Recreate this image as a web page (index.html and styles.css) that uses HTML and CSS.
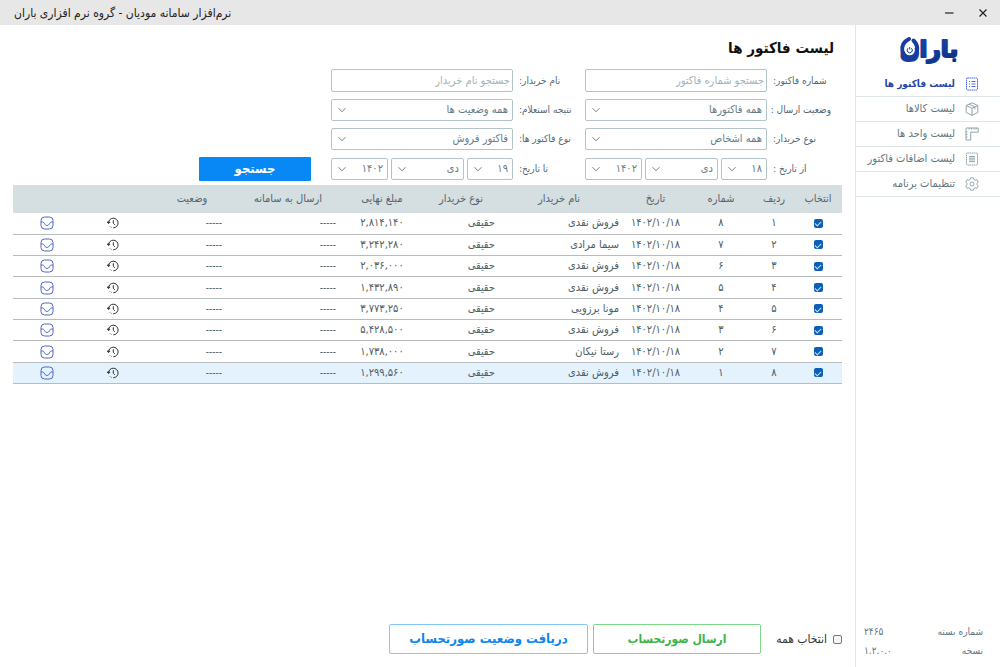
FILE: index.html
```html
<!DOCTYPE html>
<html lang="fa" dir="rtl">
<head>
<meta charset="utf-8">
<meta name="viewport" content="width=device-width, initial-scale=1">
<title>نرم‌افزار سامانه مودیان - گروه نرم افزاری باران</title>
<link rel="stylesheet" href="styles.css">
</head>
<body>
<svg class="sprite" aria-hidden="true">
  <symbol id="chevron" viewBox="0 0 10 10"><path d="M1.500 3.200 5 6.800 8.500 3.200"/></symbol>
  <symbol id="history" viewBox="0 0 12 12"><path d="M1.500 6.200A4.800 4.800 0 1 1 6.300 10.800"/><path d="M2.600 9.100l.5.5M4.300 10.300l.5.2"/><path d="M.3 5l1.300 1.600L3 5.100z"/><path d="M6.300 3.200V6.300l1.500 1.500"/></symbol>
  <symbol id="inbox" viewBox="0 0 14 14"><rect x="1" y="1" width="12" height="12" rx="3.500"/><path d="M1 6h1.600c.8 0 1.200.5 1.600 1.200C4.900 8.600 5.700 9.500 7 9.500s2.100-.9 2.800-2.300c.4-.7.8-1.200 1.600-1.200H13"/></symbol>
</svg>

<header class="titlebar">
  <div class="window-buttons">
    <button type="button" aria-label="بستن"><svg viewBox="0 0 10 10"><path d="M1.500 1.500l7 7M8.500 1.500l-7 7"/></svg></button>
    <button type="button" aria-label="کوچک کردن"><svg viewBox="0 0 10 10"><path d="M1 5h8.500"/></svg></button>
  </div>
  <div class="window-title">نرم‌افزار سامانه مودیان - گروه نرم افزاری باران</div>
</header>

<div class="app">
  <aside class="sidebar">
    <svg class="logo" viewBox="0 0 64 42" role="img" aria-label="باران">
      <defs><linearGradient id="ink" x1="0" y1="0" x2="1" y2="1"><stop offset="0" stop-color="#2440b4"/><stop offset=".5" stop-color="#14409c"/><stop offset="1" stop-color="#0d2c86"/></linearGradient></defs>
      <text class="logo-text" x="33" y="27" text-anchor="middle">باران</text>
      <path class="logo-ring" d="M13 9C7 12 5.500 17 6.500 21.500A7.500 7.500 0 0 0 21 21.500C22 17 20 13 17.500 10.500"/>
      <circle cx="13.700" cy="20" r="5.200" fill="#fff" stroke="none"/>
      <path class="logo-power" d="M12 18.200a2.600 2.600 0 1 0 3.400 0M13.700 17v2.600"/>
    </svg>
    <nav class="nav">
      <a class="nav-item active" href="#invoices"><svg viewBox="0 0 14 14"><rect x="1.500" y="1" width="11" height="12" rx="1" stroke-dasharray="1.600 .5"/><path d="M6.500 4.500h4M6.500 7h4M6.500 9.500h4M4 4.500h1M4 7h1M4 9.500h1"/></svg>لیست فاکتور ها</a>
      <a class="nav-item" href="#goods"><svg viewBox="0 0 14 14"><path d="M7 .8 12.800 3.500v7L7 13.300 1.200 10.500v-7zM1.200 3.500 7 6.300l5.800-2.800M7 6.300v7M4 2.100l5.900 2.800v2.300"/></svg>لیست کالاها</a>
      <a class="nav-item" href="#units"><svg viewBox="0 0 14 14"><path d="M1.500 1h11.700v4.200H5.700V13H1V1.500zM4 1v1.500M6.500 1v1.500M9 1v1.500M11.200 1v1.500M1 5h1.500M1 7.500h1.500M1 10h1.500"/></svg>لیست واحد ها</a>
      <a class="nav-item" href="#additions"><svg viewBox="0 0 14 14"><rect x="1.500" y="1" width="11" height="12" rx="1" stroke-dasharray="1.600 .5"/><path d="M4 4.500h6M4 6.200h6M4 7.900h6M4 9.600h6"/></svg>لیست اضافات فاکتور</a>
      <a class="nav-item" href="#settings"><svg viewBox="0 0 14 14"><path d="M5.700.8h2.600l.6 1.700 1.300.7 1.700-.4 1.300 2.200L12.100 6.300v1.400l1.100 1.300-1.300 2.200-1.700-.4-1.300.7-.6 1.700H5.700l-.6-1.700-1.300-.7-1.700.4L.8 9l1.100-1.300V6.300L.8 5l1.300-2.200 1.700.4 1.300-.7z"/><circle cx="7" cy="7" r="2"/></svg>تنظیمات برنامه</a>
    </nav>
    <dl class="meta">
      <div><dt>شماره بسته</dt><dd>۲۴۶۵</dd></div>
      <div><dt>نسخه</dt><dd>۱.۲.۰.۰</dd></div>
    </dl>
  </aside>

  <main class="content">
    <h1>لیست فاکتور ها</h1>
    <form class="filters">
      <label for="number">شماره فاکتور:</label>
      <input class="field" id="number" type="text" placeholder="جستجو شماره فاکتور">
      <label for="buyer">نام خریدار:</label>
      <input class="field" id="buyer" type="text" placeholder="جستجو نام خریدار">

      <label class="row-start" for="sent">وضعیت ارسال :</label>
      <span class="select"><select class="field" id="sent"><option>همه فاکتورها</option></select><svg><use href="#chevron"/></svg></span>
      <label for="result">نتیجه استعلام:</label>
      <span class="select"><select class="field" id="result"><option>همه وضعیت ها</option></select><svg><use href="#chevron"/></svg></span>

      <label class="row-start" for="person">نوع خریدار:</label>
      <span class="select"><select class="field" id="person"><option>همه اشخاص</option></select><svg><use href="#chevron"/></svg></span>
      <label for="kind">نوع فاکتور ها:</label>
      <span class="select"><select class="field" id="kind"><option>فاکتور فروش</option></select><svg><use href="#chevron"/></svg></span>

      <label class="row-start" for="from-day">از تاریخ :</label>
      <div class="date">
        <span class="select"><select class="field" id="from-day"><option>۱۸</option></select><svg><use href="#chevron"/></svg></span>
        <span class="select"><select class="field" aria-label="از ماه"><option>دی</option></select><svg><use href="#chevron"/></svg></span>
        <span class="select"><select class="field" aria-label="از سال"><option>۱۴۰۲</option></select><svg><use href="#chevron"/></svg></span>
      </div>
      <label for="to-day">تا تاریخ:</label>
      <div class="date">
        <span class="select"><select class="field" id="to-day"><option>۱۹</option></select><svg><use href="#chevron"/></svg></span>
        <span class="select"><select class="field" aria-label="تا ماه"><option>دی</option></select><svg><use href="#chevron"/></svg></span>
        <span class="select"><select class="field" aria-label="تا سال"><option>۱۴۰۲</option></select><svg><use href="#chevron"/></svg></span>
      </div>
      <button class="search" type="submit">جستجو</button>
    </form>

    <table class="invoices">
      <colgroup><col class="w-select"><col class="w-row"><col class="w-number"><col class="w-date"><col class="w-name"><col class="w-type"><col class="w-amount"><col class="w-sent"><col class="w-status"><col class="w-history"><col class="w-inbox"></colgroup>
      <thead>
        <tr><th>انتخاب</th><th>ردیف</th><th>شماره</th><th>تاریخ</th><th>نام خریدار</th><th>نوع خریدار</th><th>مبلغ نهایی</th><th>ارسال به سامانه</th><th>وضعیت</th><th></th><th></th></tr>
      </thead>
      <tbody>
        <tr><td><input type="checkbox" checked aria-label="انتخاب ردیف ۱"></td><td>۱</td><td>۸</td><td>۱۴۰۲/۱۰/۱۸</td><td class="name">فروش نقدی</td><td class="type">حقیقی</td><td>۲,۸۱۴,۱۴۰</td><td class="sent">-----</td><td class="status">-----</td><td><svg class="i-history"><use href="#history"/></svg></td><td><svg class="i-inbox"><use href="#inbox"/></svg></td></tr>
        <tr><td><input type="checkbox" checked aria-label="انتخاب ردیف ۲"></td><td>۲</td><td>۷</td><td>۱۴۰۲/۱۰/۱۸</td><td class="name">سیما مرادی</td><td class="type">حقیقی</td><td>۳,۲۴۲,۲۸۰</td><td class="sent">-----</td><td class="status">-----</td><td><svg class="i-history"><use href="#history"/></svg></td><td><svg class="i-inbox"><use href="#inbox"/></svg></td></tr>
        <tr><td><input type="checkbox" checked aria-label="انتخاب ردیف ۳"></td><td>۳</td><td>۶</td><td>۱۴۰۲/۱۰/۱۸</td><td class="name">فروش نقدی</td><td class="type">حقیقی</td><td>۲,۰۳۶,۰۰۰</td><td class="sent">-----</td><td class="status">-----</td><td><svg class="i-history"><use href="#history"/></svg></td><td><svg class="i-inbox"><use href="#inbox"/></svg></td></tr>
        <tr><td><input type="checkbox" checked aria-label="انتخاب ردیف ۴"></td><td>۴</td><td>۵</td><td>۱۴۰۲/۱۰/۱۸</td><td class="name">فروش نقدی</td><td class="type">حقیقی</td><td>۱,۴۳۲,۸۹۰</td><td class="sent">-----</td><td class="status">-----</td><td><svg class="i-history"><use href="#history"/></svg></td><td><svg class="i-inbox"><use href="#inbox"/></svg></td></tr>
        <tr><td><input type="checkbox" checked aria-label="انتخاب ردیف ۵"></td><td>۵</td><td>۴</td><td>۱۴۰۲/۱۰/۱۸</td><td class="name">مونا برزویی</td><td class="type">حقیقی</td><td>۳,۷۷۳,۲۵۰</td><td class="sent">-----</td><td class="status">-----</td><td><svg class="i-history"><use href="#history"/></svg></td><td><svg class="i-inbox"><use href="#inbox"/></svg></td></tr>
        <tr><td><input type="checkbox" checked aria-label="انتخاب ردیف ۶"></td><td>۶</td><td>۳</td><td>۱۴۰۲/۱۰/۱۸</td><td class="name">فروش نقدی</td><td class="type">حقیقی</td><td>۵,۴۲۸,۵۰۰</td><td class="sent">-----</td><td class="status">-----</td><td><svg class="i-history"><use href="#history"/></svg></td><td><svg class="i-inbox"><use href="#inbox"/></svg></td></tr>
        <tr><td><input type="checkbox" checked aria-label="انتخاب ردیف ۷"></td><td>۷</td><td>۲</td><td>۱۴۰۲/۱۰/۱۸</td><td class="name">رستا نیکان</td><td class="type">حقیقی</td><td>۱,۷۳۸,۰۰۰</td><td class="sent">-----</td><td class="status">-----</td><td><svg class="i-history"><use href="#history"/></svg></td><td><svg class="i-inbox"><use href="#inbox"/></svg></td></tr>
        <tr class="current"><td><input type="checkbox" checked aria-label="انتخاب ردیف ۸"></td><td>۸</td><td>۱</td><td>۱۴۰۲/۱۰/۱۸</td><td class="name">فروش نقدی</td><td class="type">حقیقی</td><td>۱,۲۹۹,۵۶۰</td><td class="sent">-----</td><td class="status">-----</td><td><svg class="i-history"><use href="#history"/></svg></td><td><svg class="i-inbox"><use href="#inbox"/></svg></td></tr>
      </tbody>
    </table>

    <footer class="actions">
      <label class="all"><input type="checkbox">انتخاب همه</label>
      <button class="send" type="button">ارسال صورتحساب</button>
      <button class="receive" type="button">دریافت وضعیت صورتحساب</button>
    </footer>
  </main>
</div>
</body>
</html>
```

FILE: styles.css
```css
* { box-sizing: border-box; }

body {
  margin: 0;
  min-height: 100vh;
  display: flex;
  flex-direction: column;
  background: #fff;
  color: #4d5d64;
  font: 11px/16px "DejaVu Sans Condensed", "DejaVu Sans", sans-serif;
}

button, input, select { font: inherit; color: inherit; margin: 0; }
svg { fill: none; stroke: currentColor; }
.sprite { display: none; }

.titlebar {
  display: flex;
  justify-content: space-between;
  align-items: center;
  height: 25px;
  padding: 0 12px 0 14px;
  background: #e7e7e7;
  color: #222;
  font-size: 12px;
}
.window-buttons { display: flex; gap: 24px; }
.window-buttons button {
  display: flex;
  padding: 0;
  border: 0;
  background: none;
}
.window-buttons svg { width: 10px; height: 10px; stroke-width: 1.2; }

.app { flex: 1; display: flex; }

.sidebar {
  width: 145px;
  flex: none;
  display: flex;
  flex-direction: column;
  border-left: 1px solid #dfe6e9;
  color: #627780;
}
.logo { width: 64px; height: 42px; margin: 5px 40px 0 0; overflow: visible; }
.logo-text {
  font-family: "DejaVu Sans", sans-serif;
  font-size: 23px;
  font-weight: bold;
  fill: url(#ink);
  stroke: url(#ink);
  stroke-width: 2;
  stroke-linejoin: round;
}
.logo-ring { stroke: #183c9f; stroke-width: 4; stroke-linecap: round; }
.logo-power { stroke: #14409c; stroke-width: 1; }

.nav { display: flex; flex-direction: column; }
.nav-item {
  display: flex;
  align-items: center;
  gap: 10px;
  height: 25px;
  padding-right: 21px;
  border-bottom: 1px solid #dde5e8;
  color: #627780;
  text-decoration: none;
  white-space: nowrap;
}
.nav-item svg { width: 14px; height: 14px; flex: none; stroke: #91a4ab; stroke-width: 1; }
.nav-item.active { color: #2745a5; font-size: 10px; font-weight: bold; }
.nav-item.active svg { stroke: #4a67d6; }

.meta { margin: auto 0 7px; padding: 0 17px 0 8px; font-size: 10px; }
.meta div { display: flex; justify-content: space-between; height: 19px; align-items: center; }
.meta dd { margin: 0; }

.content {
  flex: 1;
  min-width: 0;
  display: flex;
  flex-direction: column;
  padding: 12px 13px 13px;
}
h1 {
  margin: 0 8px 10px 0;
  color: #111;
  font-size: 15px;
  line-height: 22px;
}

.filters {
  display: grid;
  grid-template-columns: 60px minmax(0, 182px) 64px minmax(0, 182px) 132px;
  column-gap: 4px;
  row-gap: 7px;
  align-items: center;
  padding-right: 11px;
  margin-bottom: 4px;
}
.filters label {
  padding-left: 2px;
  color: #546770;
  font-size: 10px;
  text-align: left;
  white-space: nowrap;
}
.filters .row-start { grid-column: 1; }
.field {
  width: 100%;
  height: 22px;
  padding: 0 4px;
  border: 1px solid #b3c3ca;
  border-radius: 2px;
  background: #fff;
  color: #677c85;
  appearance: none;
}
input.field { height: 23px; padding: 0 2px; }
.field::placeholder { color: #a3b1b8; opacity: 1; }
.select { display: grid; align-items: center; }
.select > * { grid-area: 1 / 1; }
.select svg {
  width: 10px;
  height: 10px;
  margin-left: 6px;
  justify-self: end;
  pointer-events: none;
  stroke: #6d858f;
}
.date { display: grid; grid-template-columns: 46fr 73fr 57fr; gap: 3px; }
.search {
  width: 112px;
  height: 24px;
  margin-right: 16px;
  padding: 0;
  border: 0;
  border-radius: 1px;
  background: #0788f5;
  color: #fff;
  font-size: 13px;
  font-weight: bold;
}

.invoices {
  width: 100%;
  height: 199px;
  table-layout: fixed;
  border-collapse: collapse;
}
.w-select { width: 48px; }
.w-row { width: 40px; }
.w-number { width: 66px; }
.w-date { width: 65px; }
.w-name { width: 128px; }
.w-type { width: 68px; }
.w-amount { width: 90px; }
.w-sent { width: 98px; }
.w-status { width: 94px; }
.w-history { width: 64px; }
.w-inbox { width: 68px; }
.invoices th {
  height: 28px;
  padding: 0;
  background: #d5dfe2;
  color: #55646a;
  font-weight: normal;
}
.invoices td {
  height: 21px;
  padding: 0;
  border-bottom: 1px solid #b9bcbe;
  text-align: center;
}
.invoices td.name { padding-right: 4px; text-align: right; }
.invoices td.type { text-align: right; }
.invoices td.sent { padding-right: 1px; font-size: 10px; text-align: right; }
.invoices td.status { padding-right: 17px; font-size: 10px; text-align: right; }
.invoices .current { background: #e3f2fd; }
.invoices svg { display: block; margin: 0 auto; }
.i-history { width: 12px; height: 12px; stroke: #333; stroke-width: 1; }
.i-inbox { width: 14px; height: 14px; stroke: #4f69c4; stroke-width: 1; }
.invoices input {
  display: grid;
  place-items: center;
  width: 9px;
  height: 9px;
  margin: 0 auto;
  appearance: none;
  border-radius: 2px;
  background: #0b5fb8;
}
.invoices input:checked::after {
  content: "";
  width: 5px;
  height: 3px;
  border: solid #c4dcf3;
  border-width: 0 0 1px 1px;
  transform: rotate(-45deg);
}

.actions {
  display: flex;
  align-items: center;
  gap: 5px;
  margin-top: auto;
}
.all {
  display: flex;
  align-items: center;
  gap: 6px;
  width: 76px;
  color: #333;
  font-size: 12px;
  white-space: nowrap;
}
.all input {
  width: 9px;
  height: 9px;
  appearance: none;
  border: 1px solid #777;
  border-radius: 2px;
  background: #f5f5f5;
}
.actions button {
  height: 30px;
  padding: 0;
  border: 1px solid;
  border-radius: 2px;
  background: #fff;
  font-size: 12px;
  font-weight: bold;
}
.actions .send { width: 168px; border-color: #7fd688; color: #3cb54a; }
.actions .receive { width: 199px; border-color: #86c5fa; color: #0d86ee; font-size: 13px; }
```
